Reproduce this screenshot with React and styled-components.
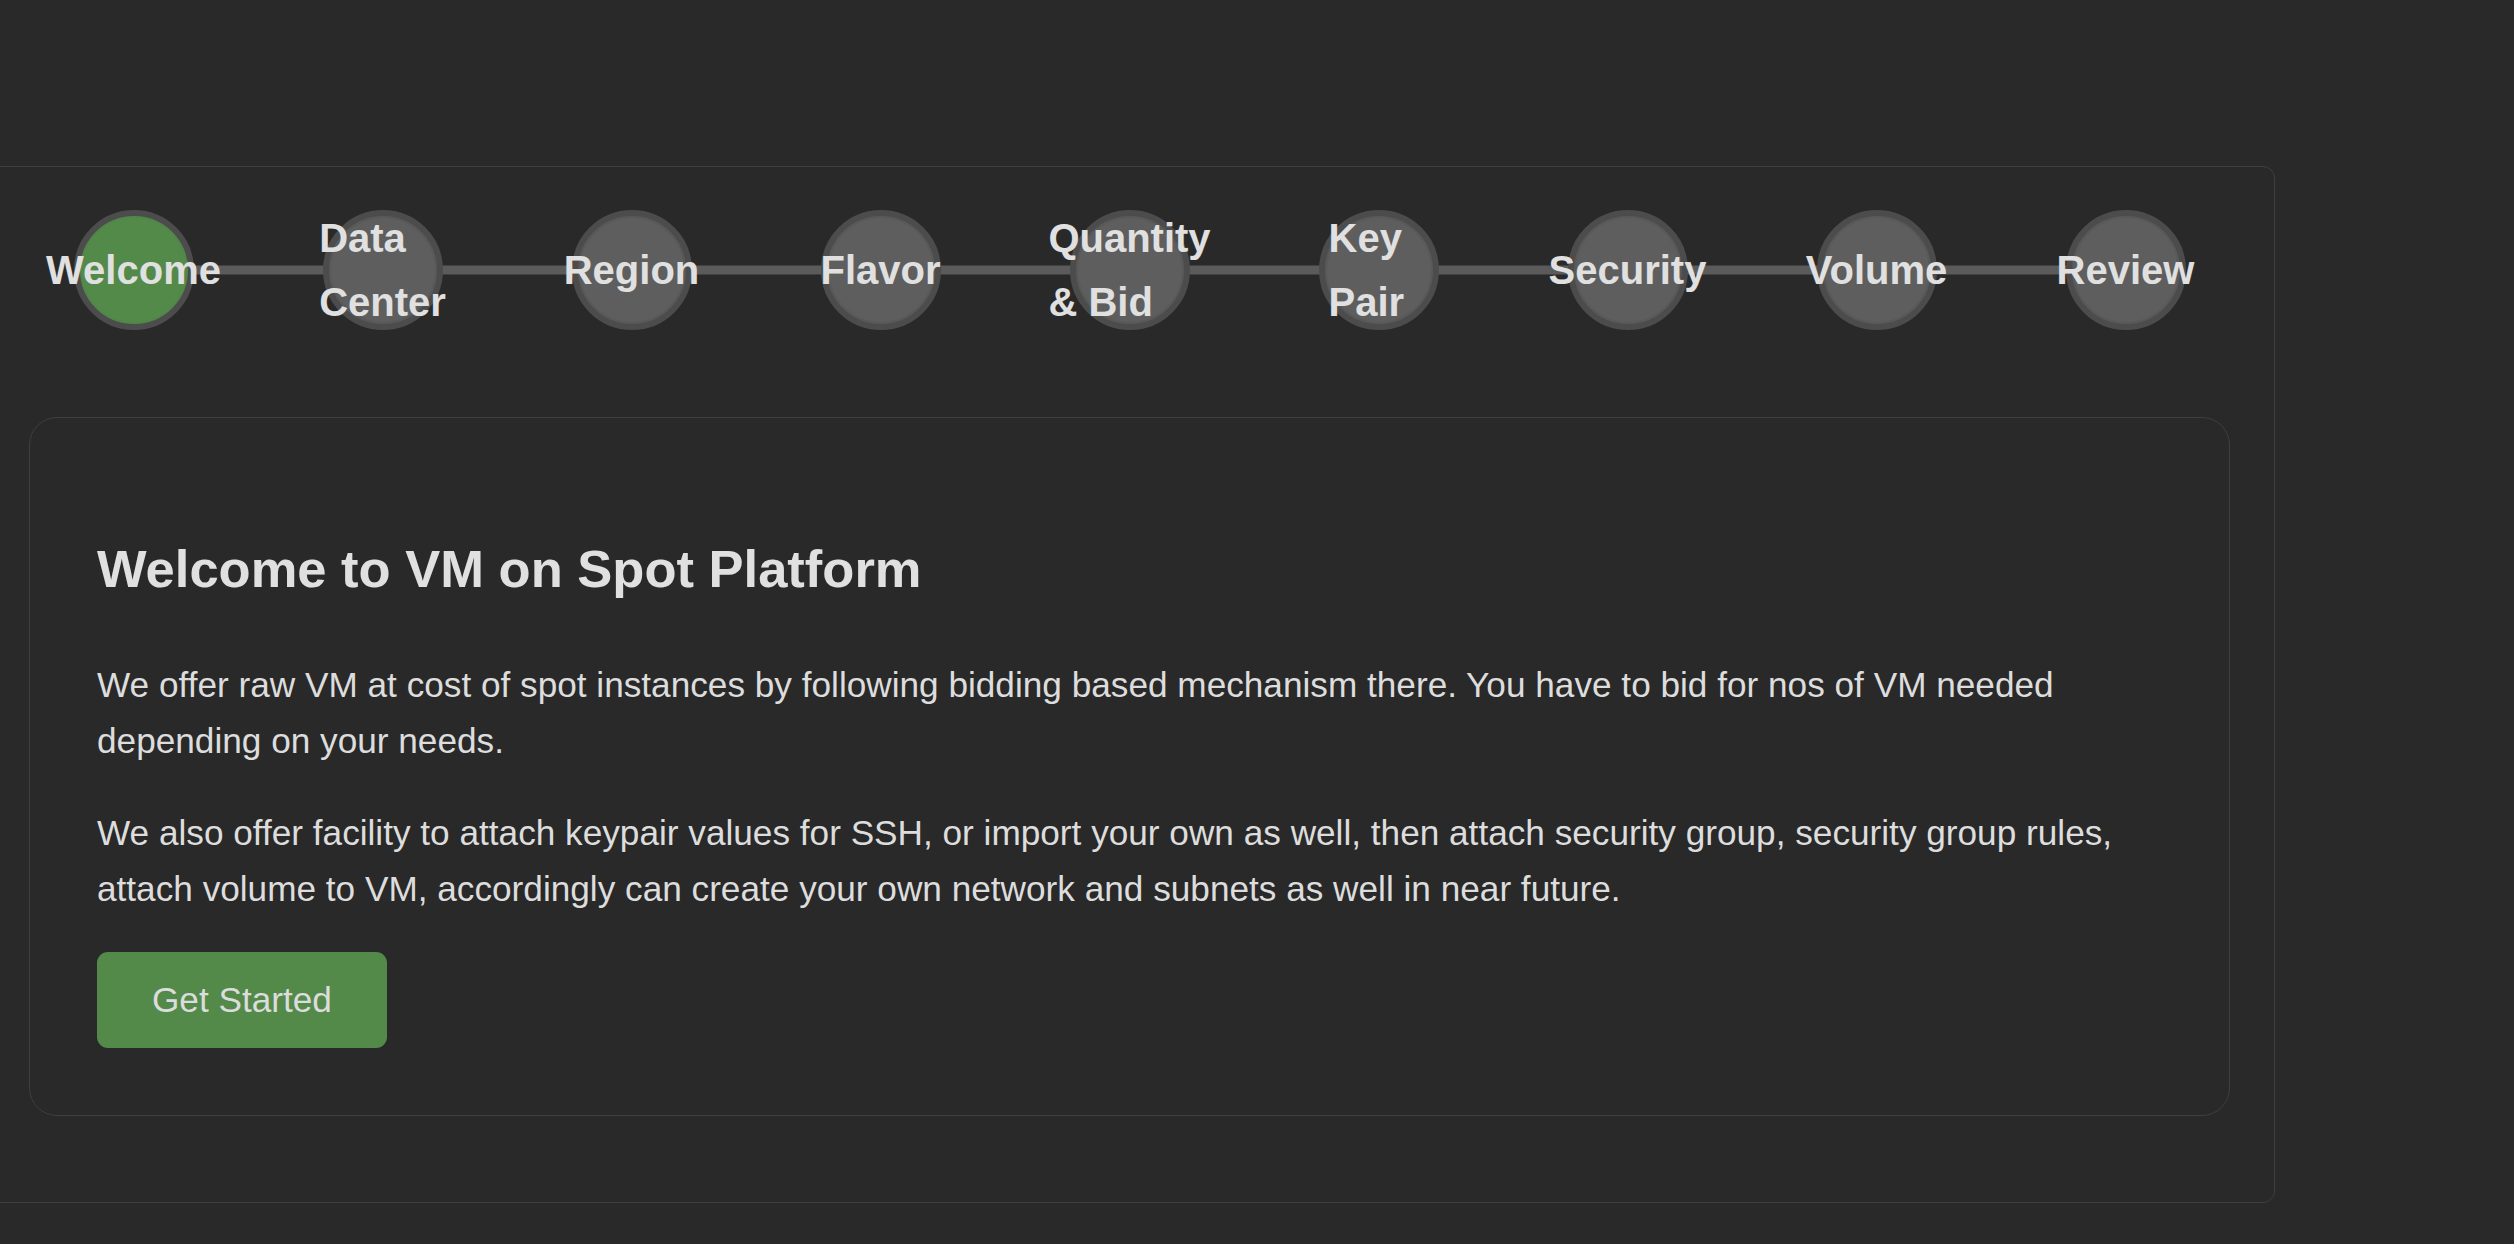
import React from "react";
import styled, { createGlobalStyle } from "styled-components";

const GlobalStyle = createGlobalStyle`
  html, body {
    margin: 0;
    padding: 0;
    background: #292929;
    overflow: hidden;
  }
  body {
    font-family: "Liberation Sans", Arial, sans-serif;
    color: #e0e0e0;
  }
`;

const Page = styled.div`
  padding-top: 166px;
  min-height: 1244px;
  box-sizing: border-box;
`;

const Wizard = styled.section`
  width: 2291px;
  margin-left: -16px;
  box-sizing: border-box;
  padding: 44px;
  border: 1px solid #3f3f3f;
  border-radius: 12px;
  background: #292929;
`;

const Stepper = styled.ol`
  position: relative;
  display: flex;
  list-style: none;
  padding: 0;
  margin: -1px -20px 87px;

  &::before {
    content: "";
    position: absolute;
    left: calc(100% / 18);
    right: calc(100% / 18);
    top: 50%;
    height: 9px;
    transform: translateY(-50%);
    background: #5b5b5b;
  }
`;

const Step = styled.li`
  flex: 1 1 0;
  min-width: 0;
  display: flex;
  justify-content: center;
  position: relative;
`;

const Circle = styled.div`
  width: 120px;
  height: 120px;
  box-sizing: border-box;
  border-radius: 50%;
  border: 6px solid #4c4c4c;
  padding: 0 4px;
  background: ${(p) => (p.$active ? "#538a4a" : "#5e5e5e")};
  box-shadow: inset 0 0 0 2px ${(p) => (p.$active ? "#518749" : "#595959")};
  display: flex;
  align-items: center;
  justify-content: center;
`;

const StepLabel = styled.span`
  font-size: 40px;
  line-height: 64px;
  font-weight: 700;
  color: #e0e0e0;
  text-align: left;
`;

const Card = styled.div`
  border: 1px solid #3f3f3f;
  border-radius: 28px;
  padding: 67px;
  margin-bottom: 42px;
`;

const Title = styled.h2`
  margin: 53px 0 58px;
  font-size: 52.5px;
  line-height: normal;
  font-weight: 700;
  color: #e0e0e0;
`;

const Text = styled.p`
  margin: 0 0 35px;
  font-size: 35.2px;
  line-height: 1.6;
  color: #dddddd;
`;

const PrimaryButton = styled.button`
  display: inline-block;
  height: 96px;
  padding: 0 55px;
  border: none;
  border-radius: 11px;
  background: #538a4a;
  color: #dcdcdc;
  font-family: "Liberation Sans", Arial, sans-serif;
  font-size: 35.2px;
  line-height: 56px;
  cursor: pointer;
`;

const steps = [
  "Welcome",
  "Data Center",
  "Region",
  "Flavor",
  "Quantity & Bid",
  "Key Pair",
  "Security",
  "Volume",
  "Review",
];

export default function App() {
  return (
    <Page>
      <GlobalStyle />
      <Wizard>
        <Stepper>
          {steps.map((s, i) => (
            <Step key={s}>
              <Circle $active={i === 0}>
                <StepLabel>{s}</StepLabel>
              </Circle>
            </Step>
          ))}
        </Stepper>
        <Card>
          <Title>Welcome to VM on Spot Platform</Title>
          <Text>
            We offer raw VM at cost of spot instances by following bidding based
            mechanism there. You have to bid for nos of VM needed depending on
            your needs.
          </Text>
          <Text>
            We also offer facility to attach keypair values for SSH, or import
            your own as well, then attach security group, security group rules,
            attach volume to VM, accordingly can create your own network and
            subnets as well in near future.
          </Text>
          <PrimaryButton>Get Started</PrimaryButton>
        </Card>
      </Wizard>
    </Page>
  );
}
